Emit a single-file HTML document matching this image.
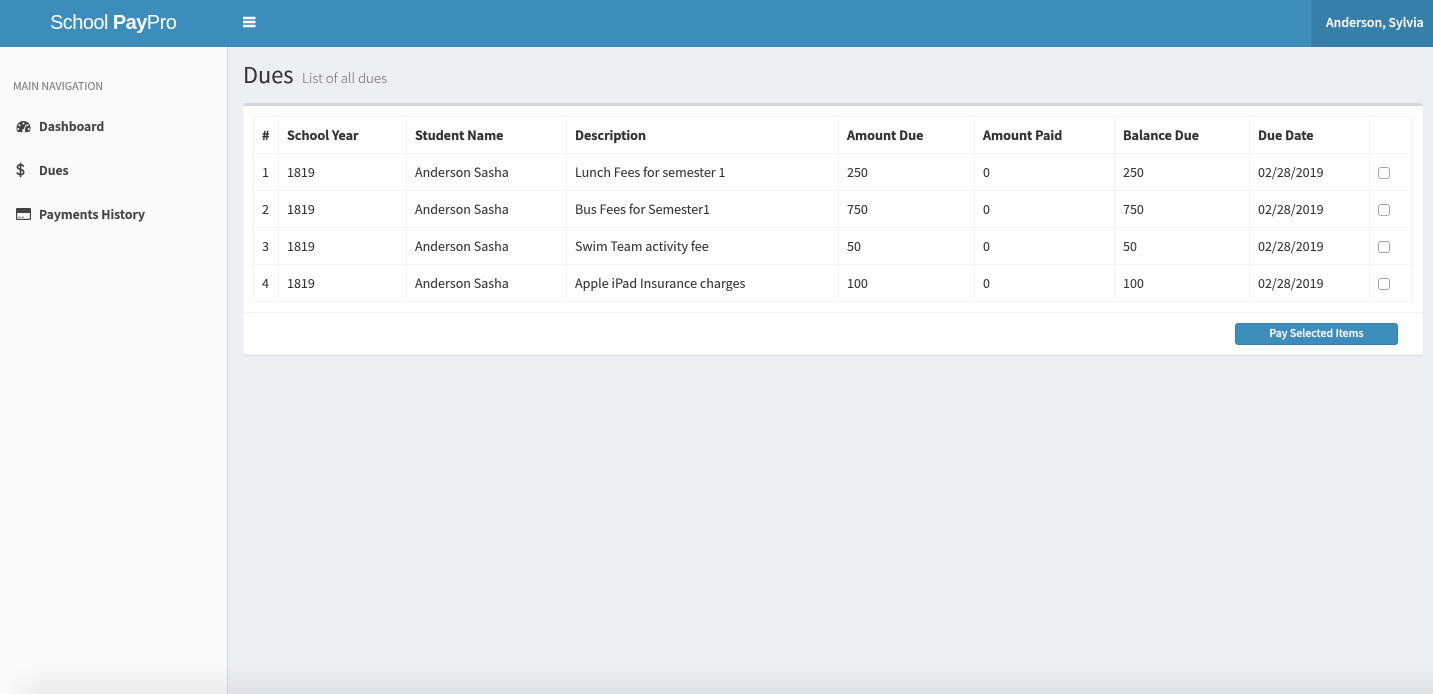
<!DOCTYPE html>
<html><head><meta charset="utf-8"><title>Dues</title>
<style>
html,body{margin:0;padding:0;width:1433px;height:694px;overflow:hidden;background:#ecf0f5}
body{position:relative;font-family:"Noto Sans CJK JP","Liberation Sans",sans-serif;font-size:12.55px;color:#333}
div{position:absolute}
.t{white-space:nowrap;line-height:20px;height:20px;-webkit-text-stroke:.08px #333}
.t.h{font-weight:700;-webkit-text-stroke:.25px #333}
.l{background:#f4f4f4}
.cb{width:10px;height:10px;border:1px solid #a5a5a5;border-radius:3px;background:#fff;left:1378px}
.t.n{font-weight:700;color:#444;left:39px;font-size:12.2px;-webkit-text-stroke:.15px #444}
.t.w{color:#fff;font-weight:500;-webkit-text-stroke:.2px #fff}
</style></head><body>
<div style="left:0;top:0;width:1433px;height:47px;background:#3c8dbc"></div>
<div style="left:1311px;top:0;width:122px;height:47px;background:#367fa9"></div>
<div class="t" style="left:50px;top:11px;font-family:'Liberation Sans',sans-serif;font-size:20px;line-height:24px;height:24px;color:#fff;letter-spacing:-.55px;font-weight:400;-webkit-text-stroke:0">School <b>Pay</b>Pro</div>
<svg style="position:absolute;left:243px;top:16px" width="13" height="12" viewBox="0 0 13 12"><path d="M0 .8h12.500v2.500H0zM0 4.800h12.500v2.500H0zM0 8.800h12.500v2.500H0z" fill="#fff"/></svg>
<div class="t w" style="left:1326px;top:12px;font-size:12.3px">Anderson, Sylvia</div>

<div style="left:0;top:47px;width:227px;height:647px;background:#f9fafc"></div>
<div style="left:227px;top:47px;width:1px;height:647px;background:#d2d6de"></div>
<div style="left:0;top:664px;width:1433px;height:30px;background:linear-gradient(rgba(0,0,0,0),rgba(0,0,0,.055))"></div>
<div style="left:0;top:650px;width:40px;height:44px;background:linear-gradient(100deg,#f9fafc 30%,rgba(249,250,252,0))"></div>

<div class="t" style="left:13px;top:77px;font-size:10.7px;color:#7d7d7d;-webkit-text-stroke:.1px #7d7d7d">MAIN NAVIGATION</div>
<svg style="position:absolute;left:16px;top:120px" width="15" height="13" viewBox="0 0 15 13"><path fill-rule="evenodd" d="M7.500 1A7 7 0 0 0 .5 8c0 1.500.4 2.800 1.200 3.800.2.200.4.300.7.300h10.200c.3 0 .5-.1.700-.3.800-1 1.200-2.300 1.200-3.800a7 7 0 0 0-7-7zM7.500 2.500a1 1 0 1 1 0 2 1 1 0 0 1 0-2zM3.500 4.300a1 1 0 1 1 0 2 1 1 0 0 1 0-2zM11.500 4.300a1 1 0 1 1 0 2 1 1 0 0 1 0-2zM2.300 8a1 1 0 1 1 0 2 1 1 0 0 1 0-2zM12.700 8a1 1 0 1 1 0 2 1 1 0 0 1 0-2zM9.800 4.500l.8.300L8.700 9.500a1.500 1.500 0 1 1-2.500 1 1.500 1.500 0 0 1 1.600-1.500z" fill="#444"/></svg>
<svg style="position:absolute;left:16px;top:162px" width="9" height="16" viewBox="0 0 9 16"><path d="M7.500 4.800C7.200 3.400 6.200 2.900 4.500 2.900 2.700 2.900 1.400 3.600 1.400 5c0 3 6.300 1.500 6.300 5.200 0 1.500-1.300 2.300-3.200 2.300-1.800 0-3.100-.6-3.500-2.100M4.500 .8v14.400" fill="none" stroke="#444" stroke-width="1.700"/></svg>
<svg style="position:absolute;left:16px;top:208px" width="15" height="12" viewBox="0 0 15 12"><path fill-rule="evenodd" d="M1 0h13a1 1 0 0 1 1 1v10a1 1 0 0 1-1 1H1a1 1 0 0 1-1-1V1a1 1 0 0 1 1-1zM1.200 5v5.800h12.600V5zM2 8.700h2.500v.8H2zM5.500 8.700h2.500v.8H5.500z" fill="#444"/></svg>
<div class="t n" style="top:116px">Dashboard</div>
<div class="t n" style="top:160px">Dues</div>
<div class="t n" style="top:204px">Payments History</div>

<div class="t" style="left:243px;top:60px;height:30px;line-height:30px;font-size:21.8px;color:#333">Dues</div>
<div class="t" style="left:302px;top:68px;font-size:13.35px;color:#6c6c6c;font-weight:300;-webkit-text-stroke:0">List of all dues</div>

<div style="left:243px;top:103px;width:1180px;height:252px;background:#fff;border-radius:3px;box-shadow:0 1px 1px rgba(0,0,0,.1)"></div>
<div style="left:243px;top:103px;width:1180px;height:3px;background:#d2d6de;border-radius:3px 3px 0 0"></div>

<div class="l" style="left:253px;top:116px;width:1160px;height:1px"></div>
<div class="l" style="left:253px;top:153px;width:1160px;height:1px"></div>
<div class="l" style="left:253px;top:190px;width:1160px;height:1px"></div>
<div class="l" style="left:253px;top:227px;width:1160px;height:1px"></div>
<div class="l" style="left:253px;top:264px;width:1160px;height:1px"></div>
<div class="l" style="left:253px;top:301px;width:1160px;height:1px"></div>
<div class="l" style="left:253px;top:116px;width:1px;height:186px"></div>
<div class="l" style="left:278px;top:116px;width:1px;height:186px"></div>
<div class="l" style="left:406px;top:116px;width:1px;height:186px"></div>
<div class="l" style="left:566px;top:116px;width:1px;height:186px"></div>
<div class="l" style="left:838px;top:116px;width:1px;height:186px"></div>
<div class="l" style="left:974px;top:116px;width:1px;height:186px"></div>
<div class="l" style="left:1114px;top:116px;width:1px;height:186px"></div>
<div class="l" style="left:1249px;top:116px;width:1px;height:186px"></div>
<div class="l" style="left:1369px;top:116px;width:1px;height:186px"></div>
<div class="l" style="left:1412px;top:116px;width:1px;height:186px"></div>
<div class="l" style="left:243px;top:312px;width:1180px;height:1px"></div>

<div class="t h" style="left:262px;top:125px">#</div>
<div class="t h" style="left:287px;top:125px">School Year</div>
<div class="t h" style="left:415px;top:125px">Student Name</div>
<div class="t h" style="left:575px;top:125px">Description</div>
<div class="t h" style="left:847px;top:125px">Amount Due</div>
<div class="t h" style="left:983px;top:125px">Amount Paid</div>
<div class="t h" style="left:1123px;top:125px">Balance Due</div>
<div class="t h" style="left:1258px;top:125px">Due Date</div>

<div class="t" style="left:262px;top:162px">1</div><div class="t" style="left:287px;top:162px">1819</div><div class="t" style="left:415px;top:162px">Anderson Sasha</div><div class="t" style="left:575px;top:162px">Lunch Fees for semester 1</div><div class="t" style="left:847px;top:162px">250</div><div class="t" style="left:983px;top:162px">0</div><div class="t" style="left:1123px;top:162px">250</div><div class="t" style="left:1258px;top:162px">02/28/2019</div><div class="cb" style="top:167px"></div>
<div class="t" style="left:262px;top:199px">2</div><div class="t" style="left:287px;top:199px">1819</div><div class="t" style="left:415px;top:199px">Anderson Sasha</div><div class="t" style="left:575px;top:199px">Bus Fees for Semester1</div><div class="t" style="left:847px;top:199px">750</div><div class="t" style="left:983px;top:199px">0</div><div class="t" style="left:1123px;top:199px">750</div><div class="t" style="left:1258px;top:199px">02/28/2019</div><div class="cb" style="top:204px"></div>
<div class="t" style="left:262px;top:236px">3</div><div class="t" style="left:287px;top:236px">1819</div><div class="t" style="left:415px;top:236px">Anderson Sasha</div><div class="t" style="left:575px;top:236px">Swim Team activity fee</div><div class="t" style="left:847px;top:236px">50</div><div class="t" style="left:983px;top:236px">0</div><div class="t" style="left:1123px;top:236px">50</div><div class="t" style="left:1258px;top:236px">02/28/2019</div><div class="cb" style="top:241px"></div>
<div class="t" style="left:262px;top:273px">4</div><div class="t" style="left:287px;top:273px">1819</div><div class="t" style="left:415px;top:273px">Anderson Sasha</div><div class="t" style="left:575px;top:273px">Apple iPad Insurance charges</div><div class="t" style="left:847px;top:273px">100</div><div class="t" style="left:983px;top:273px">0</div><div class="t" style="left:1123px;top:273px">100</div><div class="t" style="left:1258px;top:273px">02/28/2019</div><div class="cb" style="top:278px"></div>

<div style="left:1235px;top:323px;width:161px;height:20px;background:#3c8dbc;border:1px solid #367fa9;border-radius:3px"></div>
<div class="t w" style="left:1235px;top:324px;width:163px;text-align:center;font-size:10.5px">Pay Selected Items</div>
</body></html>
